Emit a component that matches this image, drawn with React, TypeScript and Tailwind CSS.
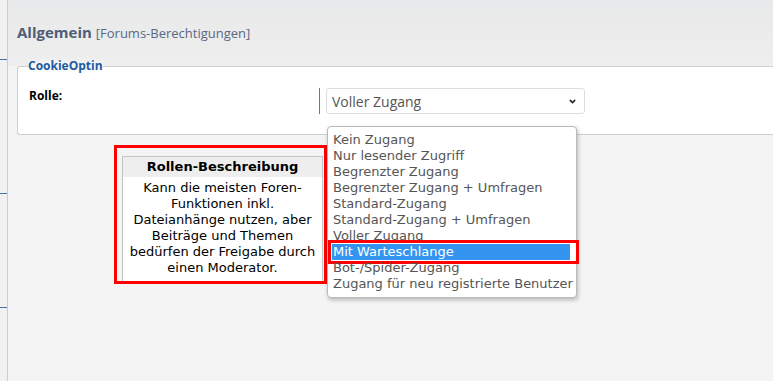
import { ChevronDown } from 'lucide-react';

const options = [
  'Kein Zugang',
  'Nur lesender Zugriff',
  'Begrenzter Zugang',
  'Begrenzter Zugang + Umfragen',
  'Standard-Zugang',
  'Standard-Zugang + Umfragen',
  'Voller Zugang',
  'Mit Warteschlange',
  'Bot-/Spider-Zugang',
  'Zugang für neu registrierte Benutzer',
];

const verdana = { fontFamily: '"DejaVu Sans", Verdana, sans-serif' };

export default function App() {
  return (
    <div className="flex h-[381px] w-[773px] overflow-hidden bg-[#f4f4f4]" style={{ fontFamily: '"Open Sans", "Noto Sans", sans-serif' }}>
      {/* left sidebar edge */}
      <div className="relative w-[8px] shrink-0 border-r border-[#cccccc] bg-[#f1f1f1]">
        <div className="absolute left-0 top-[59px] h-px w-[7px] bg-[#3f74ad]" />
        <div className="absolute left-0 top-[193px] h-px w-[7px] bg-[#3f74ad]" />
        <div className="absolute left-0 top-[307px] h-px w-[7px] bg-[#3f74ad]" />
      </div>

      <div className="relative flex-1">
        {/* header */}
        <div className="h-[66px] bg-gradient-to-b from-[#e8e9ea] to-[#eeeeee] pl-[9px] pt-[22px]">
          <h2 className="text-[15px] font-bold leading-5 text-[#4f5d76]">
            Allgemein{' '}
            <span className="text-[13px] font-normal text-[#5a6884]">[Forums-Berechtigungen]</span>
          </h2>
        </div>

        {/* fieldset */}
        <div className="relative ml-[9px] h-[69px] rounded-l-[3px] border border-r-0 border-[#cfcfcf] bg-white">
          <span className="absolute -top-[9px] left-[10px] bg-gradient-to-b from-[#eeeeee] to-white text-[12px] font-bold leading-4 text-[#1d5aa0]">
            CookieOptin
          </span>
          <div className="flex pt-[21px]">
            <div className="w-[301px] pl-[11px] text-[12px] font-bold leading-4 text-black">Rolle:</div>
            <div className="h-[26px] w-px bg-[#777777]" />
            <div className="ml-[6px] flex h-[26px] w-[259px] items-center justify-between rounded-[3px] border border-[#dddddd] bg-white pl-[5px] pr-[7px] text-[14px] text-[#555555]">
              <span>Voller Zugang</span>
              <ChevronDown size={9} strokeWidth={4} className="text-[#222]" />
            </div>
          </div>
        </div>

        {/* description */}
        <div className="ml-[106px] mt-[10px] w-[213px] border-[3px] border-[#ff0000] pl-[5px] pr-[1px] pt-[8px]">
          <div className="border border-b-0 border-[#c4c4c4] bg-white text-center text-[13px] leading-4 text-black" style={verdana}>
            <div className="bg-[#eeeeee] py-[2px] font-bold">Rollen-Beschreibung</div>
            <p className="px-[6px] pb-[5px] pt-[3px]">
              Kann die meisten Foren-Funktionen inkl. Dateianhänge nutzen, aber Beiträge und Themen bedürfen der Freigabe durch einen Moderator.
            </p>
          </div>
        </div>

        {/* dropdown list */}
        <div
          className="absolute left-[319px] top-[126px] w-[250px] rounded-[4px] border border-[#b9b9b9] bg-white py-[5px] pl-[4px] pr-[6px] text-[13px] leading-4 text-[#555555] shadow-[1px_2px_4px_rgba(0,0,0,0.25)]"
          style={verdana}
        >
          {options.map((o) => (
            <div key={o} className="relative whitespace-nowrap px-[1px]">
              {o === 'Mit Warteschlange' && (
                <div className="absolute -left-[4px] -top-[4px] h-[24px] w-[251px] border-[3px] border-[#ff0000]" />
              )}
              <span className={o === 'Mit Warteschlange' ? 'relative -mx-[1px] block bg-[#3395f0] px-[1px] text-white' : ''}>{o}</span>
            </div>
          ))}
        </div>
      </div>
    </div>
  );
}
